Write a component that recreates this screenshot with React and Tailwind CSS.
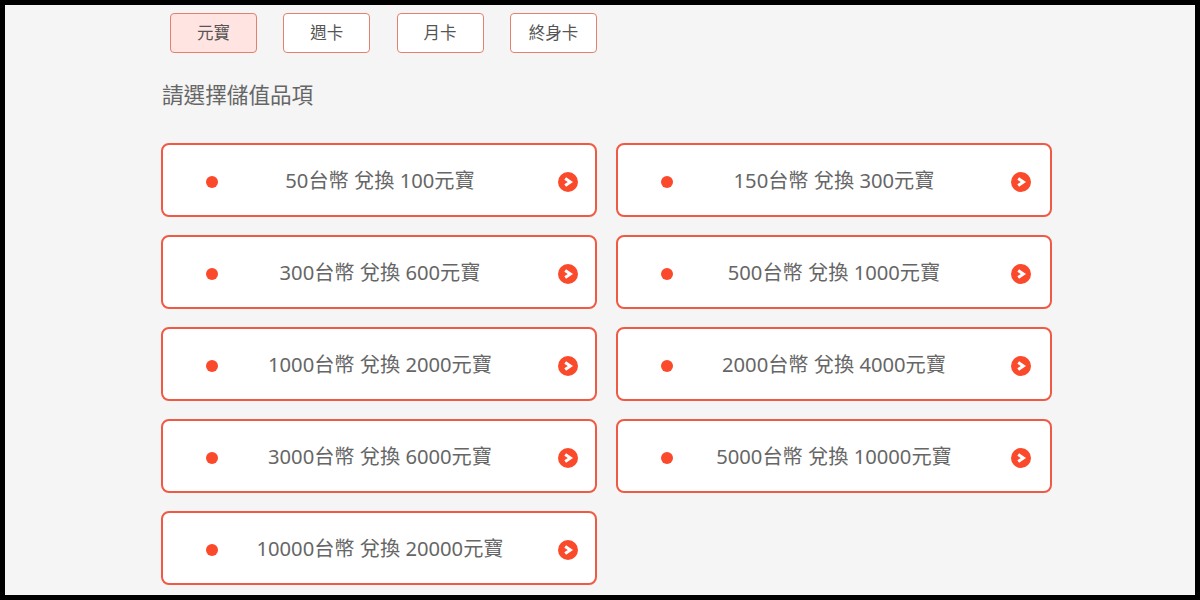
const tabs = ["元寶", "週卡", "月卡", "終身卡"];

const items = [
  "50台幣 兌換 100元寶",
  "150台幣 兌換 300元寶",
  "300台幣 兌換 600元寶",
  "500台幣 兌換 1000元寶",
  "1000台幣 兌換 2000元寶",
  "2000台幣 兌換 4000元寶",
  "3000台幣 兌換 6000元寶",
  "5000台幣 兌換 10000元寶",
  "10000台幣 兌換 20000元寶",
];

function Arrow() {
  return (
    <svg width="20" height="20" viewBox="0 0 20 20" className="shrink-0">
      <circle cx="10" cy="10" r="10" fill="#fb4a2b" />
      <path d="M7.2 6.4 L12.4 10 L7.2 13.6" fill="none" stroke="#fff" strokeWidth="3" />
    </svg>
  );
}

export default function App() {
  return (
    <div className="w-[1200px] h-[600px] overflow-hidden border-[5px] border-black bg-[#f5f5f5] font-['Noto_Sans','Noto_Sans_CJK_TC',sans-serif]">
      <div className="pl-[165px] pt-2 flex gap-[26.3px]">
        {tabs.map((t, i) => (
          <div
            key={t}
            className={
              i === 0
                ? "w-[87px] h-10 flex items-center justify-center rounded border border-[#e5806f] bg-[#ffe4e1] text-[16.5px] text-[#555]"
                : "w-[87px] h-10 flex items-center justify-center rounded border border-[#e5806f] bg-white text-[16.5px] text-[#555]"
            }
          >
            {t}
          </div>
        ))}
      </div>
      <div className="pl-[157px] mt-[26px] text-[21.6px] leading-[32px] text-[#666]">請選擇儲值品項</div>
      <div className="ml-[156px] mt-[32px] grid grid-cols-[436px_436px] gap-x-[19px] gap-y-[18px] w-[891px]">
        {items.map((t, i) => (
          <div
            key={t}
            className={
              i % 2 === 0
                ? "h-[74px] flex items-center pt-[4px] pl-[43px] pr-[17px] rounded-lg border-2 border-[#f05a45] bg-white"
                : "h-[74px] flex items-center pt-[4px] pl-[43px] pr-[19px] rounded-lg border-2 border-[#f05a45] bg-white"
            }
          >
            <span className="w-3 h-3 rounded-full bg-[#fb4a2b] shrink-0" />
            <span className="flex-1 pr-[16px] text-center text-[20.2px] leading-7 -mt-[4px] text-[#666]">{t}</span>
            <Arrow />
          </div>
        ))}
      </div>
    </div>
  );
}
